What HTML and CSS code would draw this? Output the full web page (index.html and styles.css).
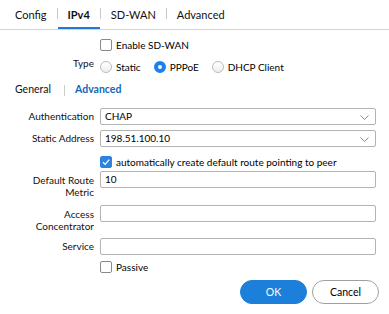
FILE: index.html
```html
<!DOCTYPE html>
<html lang="en">
<head>
  <meta charset="UTF-8" />
  <title>IPv4 PPPoE</title>
  <link rel="stylesheet" href="styles.css">
</head>
<body>
  <div class="tabs">
    <span class="tab">Config</span>
    <span class="sep"></span>
    <span class="tab active">IPv4</span>
    <span class="sep"></span>
    <span class="tab">SD-WAN</span>
    <span class="sep"></span>
    <span class="tab">Advanced</span>
  </div>

  <div class="form">
    <!-- SD-WAN toggle -->
    <div class="row row-enable">
      <div class="label"></div>
      <label class="check"><span class="box"></span>Enable SD-WAN</label>
    </div>

    <!-- Type -->
    <div class="row row-type">
      <div class="label">Type</div>
      <div class="radios">
        <label class="radio"><span class="dot"></span>Static</label>
        <label class="radio on"><span class="dot"></span>PPPoE</label>
        <label class="radio"><span class="dot"></span>DHCP Client</label>
      </div>
    </div>

    <div class="subtabs">
      <span class="subtab">General</span>
      <span class="subsep"></span>
      <span class="subtab active">Advanced</span>
    </div>

    <div class="row row-auth">
      <div class="label">Authentication</div>
      <div class="field select">CHAP
        <svg class="chev" width="9" height="5" viewBox="0 0 9 5"><path d="M0.5 0.5 L4.5 4.5 L8.5 0.5" fill="none" stroke="#888" stroke-width="1"/></svg>
      </div>
    </div>

    <div class="row row-static">
      <div class="label">Static Address</div>
      <div class="field select">198.51.100.10
        <svg class="chev" width="9" height="5" viewBox="0 0 9 5"><path d="M0.5 0.5 L4.5 4.5 L8.5 0.5" fill="none" stroke="#888" stroke-width="1"/></svg>
      </div>
    </div>

    <div class="row row-route">
      <div class="label"></div>
      <label class="check"><span class="box on">
        <svg width="10" height="10" viewBox="0 0 10 10"><path d="M2 5.2 L4.2 7.4 L8.2 2.6" fill="none" stroke="#fff" stroke-width="1.3"/></svg>
      </span>automatically create default route pointing to peer</label>
    </div>

    <div class="row row-metric">
      <div class="label two">Default Route<br>Metric</div>
      <div class="field">10</div>
    </div>

    <div class="row row-ac">
      <div class="label two">Access<br>Concentrator</div>
      <div class="field"></div>
    </div>

    <div class="row row-service">
      <div class="label">Service</div>
      <div class="field"></div>
    </div>

    <div class="row row-passive">
      <div class="label"></div>
      <label class="check"><span class="box"></span>Passive</label>
    </div>
  </div>

  <div class="actions">
    <button class="btn primary">OK</button>
    <button class="btn">Cancel</button>
  </div>
</body>
</html>
```

FILE: styles.css
```css
body {
  margin: 0;
  font-family: Lato, "Liberation Sans", sans-serif;
  font-size: 10px;
  color: #111;
  background: #fff;
}

.tabs {
  display: flex;
  height: 29px;
  padding-left: 5px;
  border-bottom: 1px solid #d4d4d4;
}

.tab {
  display: flex;
  align-items: center;
  padding: 0 10px;
  font-size: 11px;
  color: #111;
}

.tab.active {
  font-weight: bold;
  box-shadow: inset 0 -2px 0 #1f7ad6;
}

.sep {
  align-self: center;
  width: 1px;
  height: 11px;
  margin-bottom: 3px;
  background: #c8c8c8;
}

.form {
  padding-right: 13px;
}

.row {
  display: flex;
  align-items: flex-start;
}

.label {
  width: 94px;
  flex: none;
  margin-right: 6px;
  text-align: right;
  line-height: 17px;
  color: #111;
}

.label.two {
  line-height: 12px;
  padding-top: 3px;
}

.field {
  position: relative;
  flex: 1;
  height: 17px;
  box-sizing: border-box;
  border: 1px solid #b3b3b3;
  border-radius: 2px;
  padding: 0 4px;
  line-height: 15px;
  color: #000;
}

.chev {
  position: absolute;
  right: 6px;
  top: 6px;
}

.check {
  display: flex;
  align-items: center;
  line-height: 12px;
  color: #000;
}

.box {
  width: 12px;
  height: 12px;
  box-sizing: border-box;
  border: 1px solid #8a8a8a;
  border-radius: 2px;
  margin-right: 4px;
  display: flex;
  align-items: center;
  justify-content: center;
}

.box.on {
  background: #2f83e0;
  border-color: #2f83e0;
}

.radios {
  display: flex;
  margin-top: 4px;
  line-height: 12px;
}

.radio {
  display: flex;
  align-items: center;
  margin-right: 13px;
  color: #000;
}

.dot {
  width: 12px;
  height: 12px;
  box-sizing: border-box;
  border: 1px solid #bcbcbc;
  border-radius: 50%;
  background: linear-gradient(#fff, #eee);
  margin-right: 4px;
}

.radio.on .dot {
  border: 4px solid #1e7ff0;
  background: #fff;
}

.row-enable { margin-top: 9px; }
.row-type { margin-top: 6px; }
.row-type .label { line-height: 12px; }
.row-auth { margin-top: 12px; }
.row-static { margin-top: 5px; }
.row-route { margin-top: 9px; }
.row-metric { margin-top: 3px; }
.row-ac { margin-top: 7px; }
.row-service { margin-top: 6px; }
.row-passive { margin-top: 6px; }

.subtabs {
  display: flex;
  align-items: center;
  margin-top: 9px;
  padding-left: 15px;
  line-height: 14px;
  font-size: 10.5px;
}

.subtab.active {
  color: #1466b8;
  font-weight: bold;
}

.subsep {
  width: 1px;
  height: 11px;
  margin: 2px 10px 0 13px;
  background: #ccc;
}

.actions {
  display: flex;
  justify-content: flex-end;
  gap: 5px;
  margin-top: 7px;
  padding-right: 10px;
}

.btn {
  width: 67px;
  height: 24px;
  border-radius: 12px;
  border: 1px solid #a0a0a0;
  background: #fff;
  font-family: inherit;
  font-size: 10.5px;
  color: #000;
}

.btn.primary {
  background: #1c7fd9;
  border-color: #1c7fd9;
  color: #fff;
}
```
